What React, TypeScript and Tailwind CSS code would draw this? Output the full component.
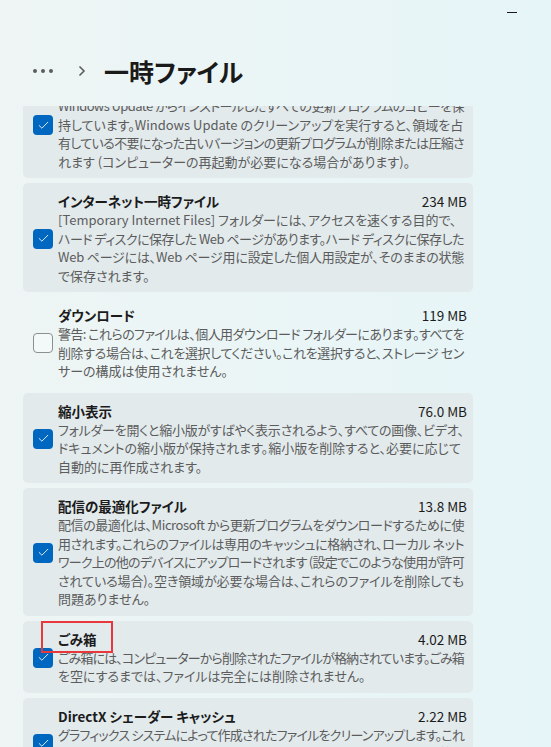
import { useLayoutEffect, useRef, useState } from "react";
import { Check } from "lucide-react";

type Item = {
  title?: string;
  size?: string;
  lines: string[];
  checked: boolean;
  mark?: boolean;
  boxTop?: boolean;
};

const items: Item[] = [
  {
    // title row is scrolled out of view
    checked: true,
    boxTop: true,
    lines: [
      "Windows Update からインストールしたすべての更新プログラムのコピーを保",
      "持しています。Windows Update のクリーンアップを実行すると、領域を占",
      "有している不要になった古いバージョンの更新プログラムが削除または圧縮さ",
      "れます (コンピューターの再起動が必要になる場合があります)。",
    ],
  },
  {
    title: "インターネット一時ファイル",
    size: "234 MB",
    checked: true,
    lines: [
      "[Temporary Internet Files] フォルダーには、アクセスを速くする目的で、",
      "ハード ディスクに保存した Web ページがあります。ハード ディスクに保存した",
      "Web ページには、Web ページ用に設定した個人用設定が、そのままの状態",
      "で保存されます。",
    ],
  },
  {
    title: "ダウンロード",
    size: "119 MB",
    checked: false,
    lines: [
      "警告: これらのファイルは、個人用ダウンロード フォルダーにあります。すべてを",
      "削除する場合は、これを選択してください。これを選択すると、ストレージ セン",
      "サーの構成は使用されません。",
    ],
  },
  {
    title: "縮小表示",
    size: "76.0 MB",
    checked: true,
    lines: [
      "フォルダーを開くと縮小版がすばやく表示されるよう、すべての画像、ビデオ、",
      "ドキュメントの縮小版が保持されます。縮小版を削除すると、必要に応じて",
      "自動的に再作成されます。",
    ],
  },
  {
    title: "配信の最適化ファイル",
    size: "13.8 MB",
    checked: true,
    lines: [
      "配信の最適化は、Microsoft から更新プログラムをダウンロードするために使",
      "用されます。これらのファイルは専用のキャッシュに格納され、ローカル ネット",
      "ワーク上の他のデバイスにアップロードされます (設定でこのような使用が許可",
      "されている場合)。空き領域が必要な場合は、これらのファイルを削除しても",
      "問題ありません。",
    ],
  },
  {
    title: "ごみ箱",
    size: "4.02 MB",
    checked: true,
    mark: true,
    lines: [
      "ごみ箱には、コンピューターから削除されたファイルが格納されています。ごみ箱",
      "を空にするまでは、ファイルは完全には削除されません。",
    ],
  },
  {
    title: "DirectX シェーダー キャッシュ",
    size: "2.22 MB",
    checked: true,
    lines: [
      "グラフィックス システムによって作成されたファイルをクリーンアップします。これ",
      "らのファイルを使用すると、アプリケーションの読み込み時間が短縮され、応答性",
      "が向上します。必要に応じて再生成されます。",
    ],
  },
];

// squeeze a line a little when it would run past the card's text column
const Line = ({ text }: { text: string }) => {
  const ref = useRef<HTMLSpanElement>(null);
  const [ls, setLs] = useState(0);
  useLayoutEffect(() => {
    const el = ref.current;
    if (!el) return;
    const w = el.getBoundingClientRect().width;
    const max = 406;
    if (w > max) setLs((max - w) / [...text].length);
  }, [text]);
  return (
    <div className="whitespace-nowrap">
      <span ref={ref} style={{ letterSpacing: ls }}>
        {text}
      </span>
    </div>
  );
};

const Box = ({ checked, className = "" }: { checked: boolean; className?: string }) =>
  checked ? (
    <div className={`flex h-5 w-5 shrink-0 items-center justify-center rounded-[4px] bg-[#0067c0] ${className}`}>
      <Check size={13} strokeWidth={1.6} className="text-white" />
    </div>
  ) : (
    <div className={`h-5 w-5 shrink-0 rounded-[4px] border border-[#8b8f91] bg-[#f3f8f9] ${className}`} />
  );

const Card = ({ item }: { item: Item }) => (
  <div
    className={`relative flex gap-[5px] rounded-[5px] pl-[10px] pr-[6px] pt-[9px] pb-[7px] ${
      item.boxTop ? "items-start" : "items-center"
    } ${item.checked ? "bg-[#e2eaec]" : ""}`}
  >
    <Box checked={item.checked} className={item.boxTop ? "mt-[37px]" : ""} />
    <div className="min-w-0 flex-1">
      <div className="flex h-[19px] justify-between text-[13.5px] leading-[19px] text-[#1b1b1b]">
        {item.title && <span className="font-semibold">{item.title}</span>}
        {item.size && <span>{item.size}</span>}
      </div>
      <div className="text-[13px] leading-[18.5px] text-[#5c5c5c]">
        {item.lines.map((l, i) => (
          <Line key={i} text={l} />
        ))}
      </div>
    </div>
    {item.mark && (
      <div className="pointer-events-none absolute left-[18px] top-0 h-[32px] w-[72px] border-[2.5px] border-[#e8383b]" />
    )}
  </div>
);

export default function App() {
  return (
    <div
      className="flex h-[747px] w-full flex-col overflow-hidden bg-gradient-to-r from-[#eef5f4] to-[#e6f5f8] [font-feature-settings:'palt']"
      style={{ fontFamily: '"Noto Sans CJK JP", "Noto Sans", sans-serif' }}
    >
      <div className="flex justify-end pr-[34px] pt-[12px]">
        <div className="h-px w-[10px] bg-[#1a1a1a]" />
      </div>

      <div className="mt-[41px] flex items-center pl-[33px]">
        <div className="flex gap-[4px]">
          <span className="h-[4px] w-[4px] rounded-full bg-[#5d5d5d]" />
          <span className="h-[4px] w-[4px] rounded-full bg-[#5d5d5d]" />
          <span className="h-[4px] w-[4px] rounded-full bg-[#5d5d5d]" />
        </div>
        <svg width="8" height="12" viewBox="0 0 8 12" className="ml-[25px]">
          <path d="M1.5 1.5 L6 6 L1.5 10.5" fill="none" stroke="#5d5d5d" strokeWidth="1.6" />
        </svg>
        <h1 className="ml-[18px] text-[25px] font-semibold leading-[34px] text-[#1a1a1a]">一時ファイル</h1>
      </div>

      <div className="ml-[23px] mt-[18px] w-[450px] flex-1 overflow-hidden">
        <div className="-mt-[37px] flex flex-col gap-[5px]">
          {items.map((it, i) => (
            <Card key={i} item={it} />
          ))}
        </div>
      </div>
    </div>
  );
}
